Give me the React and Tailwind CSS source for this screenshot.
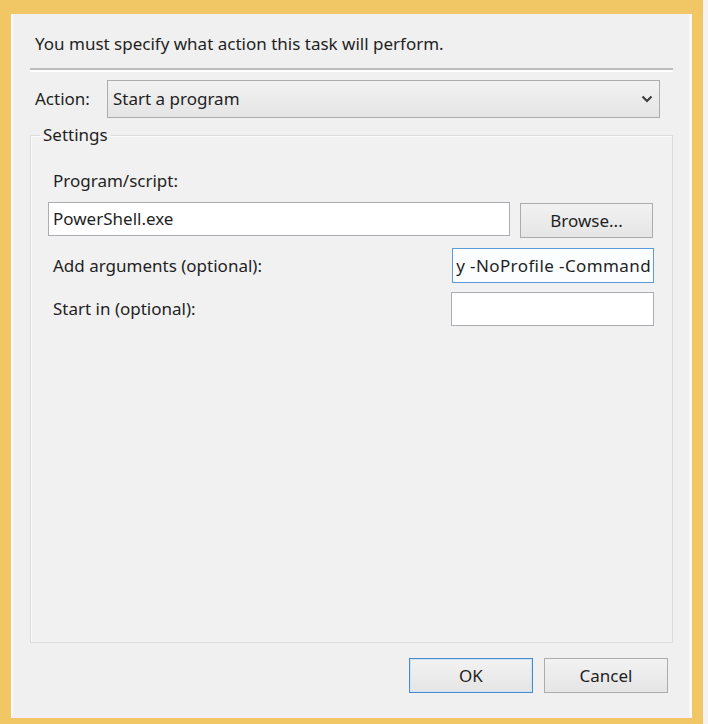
const font = { fontFamily: '"Noto Sans", "Open Sans", sans-serif' };

const Chevron = () => (
    <svg width="12" height="8" viewBox="0 0 12 8" fill="none">
        <path d="M1.5 1.5 L6 6 L10.5 1.5" stroke="#3a3a3a" strokeWidth="2" />
    </svg>
);

const App = () => {
    return (
        <div className="w-[708px] h-[724px] bg-[#f3f3f3] flex text-[17px] text-[#1f1f1f]" style={font}>
            <div className="w-[703px] h-full bg-[#f1c766] pt-[14px] pl-[11px] pr-[11px] pb-[6px]">
                <div className="w-[681px] h-[704px] bg-[#f0f0f0] border-l-[2px] border-l-[#fbfbfb] border-r-[3px] border-r-[#f9f9f9] border-b-[3px] border-b-[#f6eef7] pl-[17px] pr-[16px] pt-[20px] pb-[22px] flex flex-col">
                    <p className="h-[20px] leading-[20px] pl-[5px]">You must specify what action this task will perform.</p>

                    <div className="mt-[14px] h-[4px] flex flex-col">
                        <div className="h-[2px] bg-[#bdbdbd]" />
                        <div className="h-[2px] bg-[#fdfdfd]" />
                    </div>

                    <div className="mt-[8px] h-[38px] flex items-center">
                        <span className="w-[77px] pl-[5px] leading-[20px]">Action:</span>
                        <div className="flex-1 h-full mr-[13px] border border-[#acacac] bg-gradient-to-b from-[#f2f2f2] to-[#e5e5e5] flex items-center justify-between pl-[5px] pr-[6px]">
                            <span className="leading-[20px]">Start a program</span>
                            <Chevron />
                        </div>
                    </div>

                    <fieldset className="mt-[7px] h-[518px] shrink-0 border border-[#dcdcdc] shadow-[inset_1px_1px_0_#fafafa] bg-[#f1f1f1] pl-[17px] pr-[18px]">
                        <legend className="-ml-[8px] px-[3px] leading-[20px]">Settings</legend>

                        <p className="mt-[26px] h-[20px] leading-[20px] pl-[5px]">Program/script:</p>

                        <div className="mt-[11px] h-[36px] flex items-start gap-[10px]">
                            <div className="flex-1 h-[34px] border border-[#abadb3] bg-white flex items-center pl-[4px]">
                                <span className="leading-[20px]">PowerShell.exe</span>
                            </div>
                            <button className="w-[133px] h-[35px] mt-[1px] mr-[1px] border border-[#acacac] bg-gradient-to-b from-[#f2f2f2] to-[#e5e5e5] leading-[20px]">
                                Browse...
                            </button>
                        </div>

                        <div className="mt-[10px] h-[35px] flex items-center justify-between">
                            <span className="pl-[5px] leading-[20px]">Add arguments (optional):</span>
                            <div className="w-[202px] h-full border border-[#5b9bd8] bg-[#fbfdff] overflow-hidden flex items-center justify-end pr-[2px]">
                                <span className="leading-[20px] whitespace-nowrap tracking-[0.4px]">y -NoProfile -Command</span>
                            </div>
                        </div>

                        <div className="mt-[9px] h-[34px] flex items-center justify-between">
                            <span className="pl-[5px] leading-[20px]">Start in (optional):</span>
                            <div className="w-[203px] h-full border border-[#abadb3] bg-white" />
                        </div>
                    </fieldset>

                    <div className="mt-[15px] h-[35px] flex justify-end gap-[11px] pr-[5px]">
                        <button className="w-[124px] h-full border border-[#4a8bc8] shadow-[inset_0_0_0_1px_#cde4f7] bg-gradient-to-b from-[#f2f2f2] to-[#e5e5e5] leading-[20px]">
                            OK
                        </button>
                        <button className="w-[124px] h-full border border-[#acacac] bg-gradient-to-b from-[#f2f2f2] to-[#e5e5e5] leading-[20px]">
                            Cancel
                        </button>
                    </div>
                </div>
            </div>
        </div>
    );
};

export default App;
